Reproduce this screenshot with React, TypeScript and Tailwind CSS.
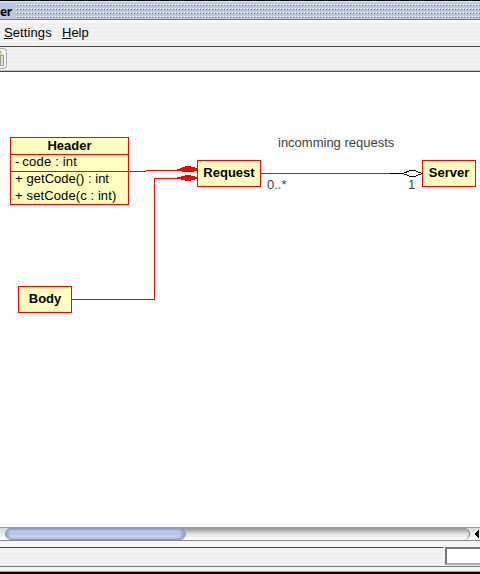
import type { ReactNode } from "react";

function Label({ x, y, className = "", children }: { x: number; y: number; className?: string; children: ReactNode }) {
  return (
    <span className={`absolute whitespace-pre text-[13px] leading-4 ${className}`} style={{ left: x, top: y }}>
      {children}
    </span>
  );
}

function ClassBox({ x, y, width, name }: { x: number; y: number; width: number; name: string }) {
  return (
    <div
      className="absolute flex h-[27px] items-start justify-center border border-[#ff0000] bg-[#ffffc0] pt-[4px] text-[13px] leading-4 font-bold"
      style={{ left: x, top: y, width }}
    >
      {name}
    </div>
  );
}

function Connectors() {
  return (
    <svg className="absolute inset-0" width="480" height="455" viewBox="0 72 480 455" shapeRendering="crispEdges" fill="none">
      <path d="M129 171.5H146M146 170.5H178M72 299.5H154.5V178.5H180M261 173.5H390" stroke="#f00" />
      <path d="M390 173.5H403" stroke="#000" />
      <path d="M185 166h6v1h4v1h2v3h-3v1h-12v-1h-5v-1h0v-1h3v-1h2v-1h3z" fill="#f00" />
      <path d="M185 175h6v1h4v1h2v2h-2v1h-4v1h-6v-1h-4v-1h-4v-1h0v-1h4v-1h4z" fill="#f00" />
      <path d="M403 173.5L409.5 170.8H415.5L422 173.5L415.5 176.2H409.5Z" fill="#fff" stroke="#000" />
    </svg>
  );
}

const stripes = "bg-[repeating-linear-gradient(180deg,#f4f4f4_0_2px,#eeeeee_2px_4px)]";

export default function App() {
  return (
    <div className="flex h-[574px] w-[480px] flex-col overflow-hidden bg-white font-['Liberation_Sans',sans-serif] text-black">
      <header className="flex h-5 shrink-0 border-t border-b border-t-black border-b-[#777783] bg-[#bdc6e3]">
        <div className="flex w-full border-t border-[#e6eaf8]">
          <span className="w-4 font-['Noto_Sans','Open_Sans',sans-serif] text-[12px] leading-[19px] font-bold tracking-[-0.4px]">er</span>
          <svg className="h-[17px] flex-1" width="464" height="17" shapeRendering="crispEdges">
            <defs>
              <pattern id="dots" x="0" y="2" width="3" height="4" patternUnits="userSpaceOnUse">
                <rect width="1" height="1" fill="#fff" />
                <rect x="1" y="1" width="1" height="1" fill="#7180a6" />
              </pattern>
            </defs>
            <rect y="2" width="464" height="14" fill="url(#dots)" />
          </svg>
        </div>
      </header>
      <nav className={`flex h-[27px] shrink-0 gap-[10px] border-t border-b border-t-white border-b-[#444] pl-1 text-[13px] leading-[24px] ${stripes}`}>
        <span className="w-12 tracking-[0.1px]"><span className="underline underline-offset-1">S</span>ettings</span>
        <span><span className="underline underline-offset-1">H</span>elp</span>
      </nav>
      <div className={`h-[25px] shrink-0 border-b border-[#444] ${stripes}`}>
        <div className="flex h-full w-full items-start border-b border-[#c8c8c8]">
          <div className="mt-px h-[21px] w-[7px] rounded-r border border-l-0 border-[#aaa] bg-[#f4f4f4]">
            <svg width="5" height="19" shapeRendering="crispEdges">
              <path d="M0 2h1v3H0z" fill="#888" />
              <path d="M0 3h2v3H0z" fill="#e4cf87" />
              <path d="M0 6h3v10H0z" fill="#e8e8e0" stroke="#999" />
              <path d="M0 9h2M0 12h2" stroke="#aaa" />
            </svg>
          </div>
        </div>
      </div>

      <main className="relative h-[455px] shrink-0 bg-white">
        <div className="absolute top-[65px] left-[10px] flex h-[68px] w-[119px] flex-col border border-[#ff0000] bg-[#ffffc0] text-[13px]">
          <div className="h-[17px] border-b border-[#ff0000] text-center leading-[15px] font-bold">Header</div>
          <div className="flex h-[17px] gap-[3px] border-b border-[#ff0000] pl-1 leading-[14px] whitespace-pre">
            <span>-</span><span className="tracking-[0.2px]">code : int</span>
          </div>
          <div className="flex h-[17px] gap-1 pl-1 leading-[14px]"><span>+</span><span>getCode() : int</span></div>
          <div className="flex h-[15px] gap-1 pl-1 leading-[14px]"><span>+</span><span className="tracking-[0.1px]">setCode(c : int)</span></div>
        </div>
        <ClassBox x={197} y={88} width={64} name="Request" />
        <ClassBox x={422} y={88} width={54} name="Server" />
        <ClassBox x={18} y={214} width={54} name="Body" />
        <Connectors />
        <Label x={278} y={63} className="text-[#404040]">incomming requests</Label>
        <Label x={267} y={105} className="text-[#404040]">0..*</Label>
        <Label x={408} y={105} className="text-[#404040]">1</Label>
      </main>

      <div className="flex h-[14px] shrink-0 border-t border-b border-t-[#999] border-b-[#888] bg-gradient-to-b from-[#d8d8d8] to-white">
        <div className="w-[5px]" />
        <div className="h-3 w-[465px] rounded-l-full rounded-r-full border-r border-[#777] bg-gradient-to-b from-[#949494] via-[#e2e2e2] to-white">
          <div className="h-3 w-[181px] rounded-full border border-[#8f9bc0] bg-[linear-gradient(180deg,#a9b5d8_0_1px,#c1cae9_2px_4px,#aab6dc_5px,#c5cff0_6px_100%)] shadow-[inset_2px_0_2px_#97a4ca,inset_-3px_0_2px_#97a4ca]" />
        </div>
        <svg className="ml-[3px]" width="7" height="12" shapeRendering="crispEdges">
          <path d="M1 6L5 2H6V10H5Z" fill="#000" />
        </svg>
      </div>
      <div className="h-[6px] shrink-0 bg-[#f5f5f5]" />
      <footer className={`flex h-5 shrink-0 border-b border-[#777] ${stripes}`}>
        <div className="h-[19px] w-[444px] border-t border-r border-t-[#444] border-r-white" />
        <div className="ml-px h-[18px] w-[35px] border-t-2 border-b-2 border-l-2 border-t-[#777] border-b-[#aaa] border-l-[#777] bg-white" />
      </footer>
      <div className="h-[5px] shrink-0 border-b border-[#aaa] bg-[#f5f5f5]" />
      <div className="h-[2px] shrink-0 bg-black" />
    </div>
  );
}
